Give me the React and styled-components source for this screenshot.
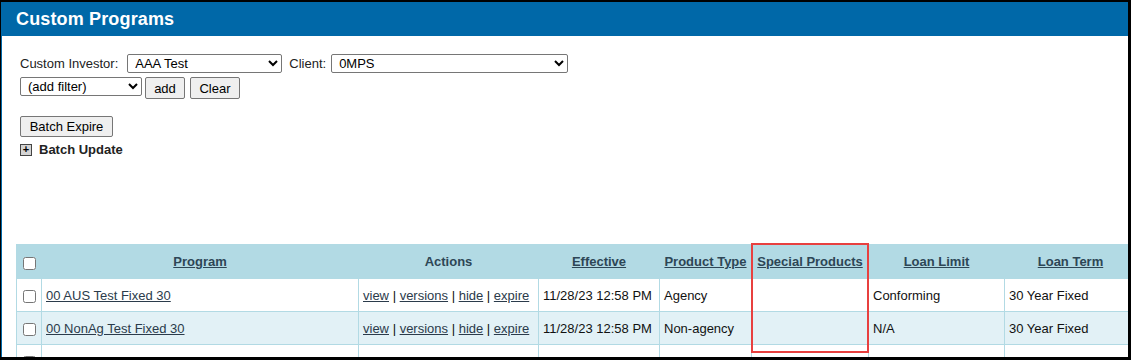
import React from 'react'
import styled, { createGlobalStyle } from 'styled-components'

const GlobalStyle = createGlobalStyle`
  html, body {
    margin: 0;
    padding: 0;
    background: #fff;
  }
  body {
    font-family: "Liberation Sans", Arial, sans-serif;
    font-size: 13px;
    color: #222;
  }
`

const programs = [
  { name: '00 AUS Test Fixed 30', effective: '11/28/23 12:58 PM', type: 'Agency', special: '', limit: 'Conforming', term: '30 Year Fixed' },
  { name: '00 NonAg Test Fixed 30', effective: '11/28/23 12:58 PM', type: 'Non-agency', special: '', limit: 'N/A', term: '30 Year Fixed' },
  { name: '1 ag test', effective: '11/28/23 12:58 PM', type: 'Agency', special: '', limit: 'Conforming', term: '30 Year Fixed' },
]

const actions = ['view', 'versions', 'hide', 'expire']

const App = () => {
  return (
    <>
      <GlobalStyle />
      <Frame>
        <Page>
          <TitleBar>
            <Title>Custom Programs</Title>
          </TitleBar>

          <Filters>
            <FilterRow>
              <Label after={9}>Custom Investor:</Label>
              <Select width={155} defaultValue="aaa">
                <option value="aaa">AAA Test</option>
              </Select>
              <Label before={7} after={5}>Client:</Label>
              <Select width={237} defaultValue="0mps">
                <option value="0mps">0MPS</option>
              </Select>
            </FilterRow>
            <FilterRow>
              <Select width={122} height={19} defaultValue="">
                <option value="">(add filter)</option>
              </Select>
              <Button width={40} gap={3}>add</Button>
              <Button width={50} gap={5}>Clear</Button>
            </FilterRow>
          </Filters>

          <BatchArea>
            <Button width={93} height={21}>Batch Expire</Button>
            <Toggle>
              <PlusBox>+</PlusBox>
              <ToggleText>Batch Update</ToggleText>
            </Toggle>
          </BatchArea>

          <TableWrap>
            <Table>
              <colgroup>
                <col style={{ width: 25 }} />
                <col style={{ width: 317 }} />
                <col style={{ width: 180 }} />
                <col style={{ width: 121 }} />
                <col style={{ width: 92 }} />
                <col style={{ width: 117 }} />
                <col style={{ width: 136 }} />
                <col style={{ width: 132 }} />
              </colgroup>
              <thead>
                <tr>
                  <HeadCell><Check type="checkbox" /></HeadCell>
                  <HeadCell><HeadLink href="#">Program</HeadLink></HeadCell>
                  <HeadCell>Actions</HeadCell>
                  <HeadCell><HeadLink href="#">Effective</HeadLink></HeadCell>
                  <HeadCell><HeadLink href="#">Product Type</HeadLink></HeadCell>
                  <HeadCell><HeadLink href="#">Special Products</HeadLink></HeadCell>
                  <HeadCell><HeadLink href="#">Loan Limit</HeadLink></HeadCell>
                  <HeadCell><HeadLink href="#">Loan Term</HeadLink></HeadCell>
                </tr>
              </thead>
              <tbody>
                {programs.map((p, i) => (
                  <Row key={p.name} alt={i % 2 === 1}>
                    <CheckCell><Check type="checkbox" /></CheckCell>
                    <Cell><RowLink href="#">{p.name}</RowLink></Cell>
                    <Cell>
                      {actions.map((a, j) => (
                        <React.Fragment key={a}>
                          {j > 0 && ' | '}
                          <RowLink href="#">{a}</RowLink>
                        </React.Fragment>
                      ))}
                    </Cell>
                    <Cell>{p.effective}</Cell>
                    <Cell>{p.type}</Cell>
                    <Cell>{p.special}</Cell>
                    <Cell>{p.limit}</Cell>
                    <Cell>{p.term}</Cell>
                  </Row>
                ))}
              </tbody>
            </Table>
            <Highlight />
          </TableWrap>
        </Page>
      </Frame>
    </>
  )
}

export default App

const Frame = styled.div`
  width: 1131px;
  height: 360px;
  box-sizing: border-box;
  border-style: solid;
  border-color: #000;
  border-width: 2px 3px 3px 1px;
  overflow: hidden;
`

const Page = styled.div`
  height: 100%;
  border-left: 1px solid #0068a8;
  background: #fff;
`

const TitleBar = styled.div`
  height: 34px;
  background: #0068a8;
  display: flex;
  align-items: center;
  padding-left: 14px;
`

const Title = styled.h1`
  margin: 0;
  color: #fff;
  font-size: 18px;
  font-weight: bold;
  line-height: 1;
  letter-spacing: 0.15px;
`

const Filters = styled.div`
  padding: 18px 0 0 18px;
  display: flex;
  flex-direction: column;
  gap: 4px;
`

const FilterRow = styled.div`
  display: flex;
  align-items: flex-start;
  height: 19px;
  &:last-child {
    height: 22px;
  }
`

const Label = styled.span`
  margin-left: ${p => p.before || 0}px;
  margin-right: ${p => p.after || 0}px;
  line-height: 19px;
  color: #222;
  font-size: 13px;
`

const Select = styled.select`
  width: ${p => p.width}px;
  height: ${p => p.height || 19}px;
  box-sizing: border-box;
  margin: 0;
  padding: 0 0 0 3px;
  font-family: "Liberation Sans", Arial, sans-serif;
  font-size: 13px;
  color: #000;
  background: #fff;
  border: 1px solid #767676;
  border-radius: 2px;
`

const Button = styled.button`
  width: ${p => p.width}px;
  height: ${p => p.height || 22}px;
  margin: 0 0 0 ${p => p.gap || 0}px;
  padding: 0;
  box-sizing: border-box;
  font-family: "Liberation Sans", Arial, sans-serif;
  font-size: 13px;
  color: #000;
  background: #efefef;
  border: 1px solid #767676;
  border-radius: 2px;
`

const BatchArea = styled.div`
  padding: 17px 0 0 18px;
  display: flex;
  flex-direction: column;
  align-items: flex-start;
  gap: 6px;
`

const Toggle = styled.div`
  display: flex;
  align-items: center;
  gap: 7px;
  height: 13px;
`

const PlusBox = styled.span`
  width: 12px;
  height: 12px;
  box-sizing: border-box;
  border: 1px solid #444;
  background: #d4d4d4;
  font-size: 11px;
  font-weight: bold;
  line-height: 9px;
  text-align: center;
  color: #000;
`

const ToggleText = styled.span`
  font-weight: bold;
  font-size: 13px;
  color: #222;
`

const TableWrap = styled.div`
  position: relative;
  margin: 88px 0 0 14px;
`

const Table = styled.table`
  border-collapse: collapse;
  table-layout: fixed;
  width: 1120px;
  font-size: 13px;
`

const HeadCell = styled.th`
  height: 33px;
  padding: 0 4px;
  background: #b2dae4;
  border: 1px solid #b2dae4;
  color: #2d4656;
  font-weight: bold;
  text-align: center;
  white-space: nowrap;
  &:first-child {
    padding: 0;
  }
`

const HeadLink = styled.a`
  color: #2d4656;
  text-decoration: underline;
`

const Row = styled.tr`
  background: ${p => (p.alt ? '#e2f1f6' : '#fff')};
`

const Cell = styled.td`
  height: 32px;
  padding: 0 4px;
  border: 1px solid #b2dae4;
  color: #111;
  white-space: nowrap;
  overflow: hidden;
`

const CheckCell = styled(Cell)`
  padding: 0;
  text-align: center;
`

const Check = styled.input`
  width: 13px;
  height: 13px;
  margin: 3px 0 0 0;
  vertical-align: middle;
`

const RowLink = styled.a`
  color: #2b3b4b;
  text-decoration: underline;
`

const Highlight = styled.div`
  position: absolute;
  left: 735px;
  top: -1px;
  width: 118px;
  height: 110px;
  box-sizing: border-box;
  border: 2px solid #e8403f;
  pointer-events: none;
`
